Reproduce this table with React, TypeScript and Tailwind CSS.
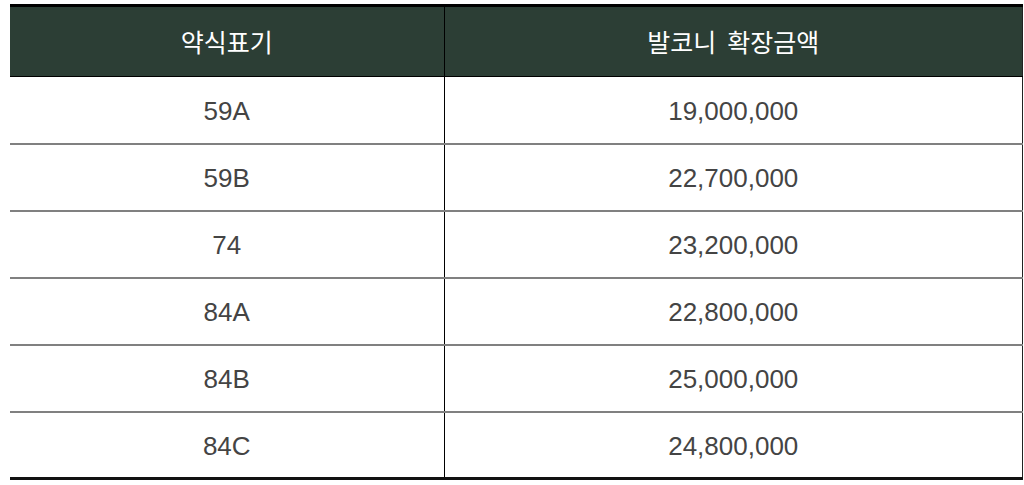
import React from 'react';

const rows = [
  { type: '59A', price: '19,000,000' },
  { type: '59B', price: '22,700,000' },
  { type: '74', price: '23,200,000' },
  { type: '84A', price: '22,800,000' },
  { type: '84B', price: '25,000,000' },
  { type: '84C', price: '24,800,000' },
];

const App = () => {
  return (
    <div className="w-[1024px] h-[485px] bg-white pt-[4px] pl-[10px] font-['Noto_Sans_CJK_KR','Noto_Sans',sans-serif]">
      <table className="w-[1013px] border-collapse border-t-[3px] border-b-[3px] border-t-black border-b-[#111] border-r border-r-[#222] table-fixed">
        <thead>
          <tr className="bg-[#2c3e35] h-[71px] border-b border-b-black">
            <th className="w-[434px] text-[25px] font-normal text-white border-r border-r-black">약식표기</th>
            <th className="text-[25px] font-normal text-white">발코니&nbsp; 확장금액</th>
          </tr>
        </thead>
        <tbody className="font-['Liberation_Sans','Noto_Sans_CJK_KR',sans-serif]">
          {rows.map((r, i) => (
            <tr key={r.type} className={`h-[67px] ${i < rows.length - 1 ? 'border-b-2 border-b-[#808080]' : ''}`}>
              <td className="pt-[3px] text-center text-[26px] text-[#444] border-r border-r-black">{r.type}</td>
              <td className="pt-[3px] text-center text-[26px] text-[#444]">{r.price}</td>
            </tr>
          ))}
        </tbody>
      </table>
    </div>
  );
};

export default App;
